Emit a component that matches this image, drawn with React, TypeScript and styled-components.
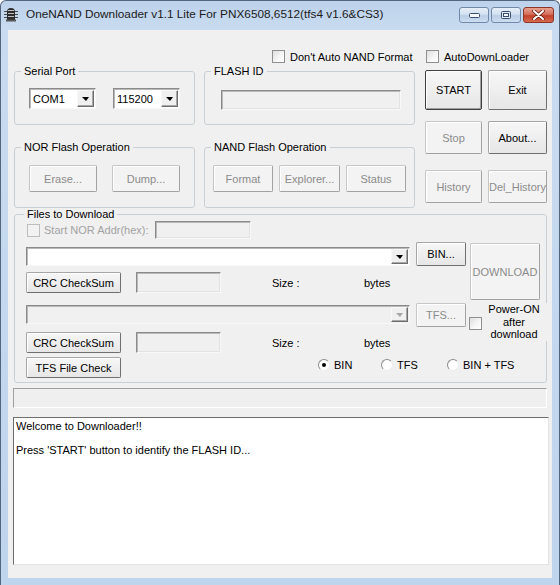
import React from 'react';
import styled, { createGlobalStyle } from 'styled-components';

const GlobalStyle = createGlobalStyle`
  html, body {
    margin: 0;
    padding: 0;
    background: #ffffff;
  }
  body {
    font-family: "Liberation Sans", Arial, sans-serif;
    font-size: 11px;
    color: #000;
  }
  * {
    box-sizing: border-box;
  }
`;

const Window = styled.div`
  width: 560px;
  height: 585px;
  display: flex;
  flex-direction: column;
  border: 1px solid #54667d;
  border-bottom: none;
  border-radius: 6px 6px 0 0;
  background: linear-gradient(#bdd2eb, #c8dbf0 28px, #bfd4ed);
  padding: 0 7px 7px;
  overflow: hidden;
`;

const TitleBar = styled.div`
  height: 29px;
  flex: none;
  display: flex;
  align-items: flex-start;
  margin: 0 -7px;
  padding: 0 5px 0 3px;
`;

const AppIcon = styled.svg`
  flex: none;
  margin-top: 6px;
`;

const Title = styled.div`
  flex: 1;
  margin: 6px 0 0 8px;
  font-size: 11.8px;
  line-height: 15px;
  color: #1b1b1b;
  white-space: nowrap;
  overflow: hidden;
`;

const CaptionGroup = styled.div`
  display: flex;
  gap: 2px;
  margin-top: 6px;
`;

const Caption = styled.div<{ $close?: boolean }>`
  width: ${(p) => (p.$close ? 31 : 30)}px;
  height: 16px;
  display: grid;
  place-items: center;
  border: 1px solid ${(p) => (p.$close ? '#8c3526' : '#7089a8')};
  border-radius: 3px;
  background: ${(p) =>
    p.$close
      ? 'linear-gradient(#e8a08f, #d46f5c 45%, #c2412a 55%, #d66b4f)'
      : 'linear-gradient(#e7eff8, #d2e0f0 45%, #b9cde5 55%, #cddef1)'};
`;

const Client = styled.div`
  flex: 1;
  display: flex;
  flex-direction: column;
  background: #f0f0f0;
  padding: 19px 5px 0 6px;
`;

const Top = styled.div`
  display: grid;
  grid-template-columns: 401px 122px;
  column-gap: 10px;
`;

const Column = styled.div`
  display: flex;
  flex-direction: column;
`;

const CheckRow = styled.div<{ $indent?: number }>`
  height: 15px;
  display: flex;
  align-items: center;
  gap: 5px;
  padding-left: ${(p) => p.$indent ?? 0}px;
  white-space: nowrap;
`;

const Box = styled.span<{ $disabled?: boolean }>`
  width: 13px;
  height: 13px;
  flex: none;
  border: 1px solid ${(p) => (p.$disabled ? '#bdbdbd' : '#8e8f8f')};
  background: ${(p) =>
    p.$disabled ? '#f2f2f2' : 'linear-gradient(135deg, #dedede, #f7f7f7 60%, #ffffff)'};
`;

const Muted = styled.span`
  color: #a2a2a2;
`;

const GroupRow = styled.div<{ $mt?: number }>`
  display: flex;
  gap: 9px;
  margin-top: ${(p) => p.$mt ?? 0}px;
`;

const Group = styled.fieldset<{ $w: number; $h: number; $mt?: number }>`
  width: ${(p) => p.$w}px;
  height: ${(p) => p.$h}px;
  min-width: 0;
  margin: ${(p) => p.$mt ?? 0}px 0 0 0;
  padding: 0;
  border: 1px solid #c9d0d5;
  border-radius: 3px;
`;

const Legend = styled.legend<{ $indent?: number }>`
  margin-left: ${(p) => p.$indent ?? 6}px;
  padding: 0 3px;
  font-size: 11px;
  line-height: 14px;
`;

const GroupBody = styled.div<{ $pt: number; $pl: number; $gap?: number }>`
  display: flex;
  align-items: flex-start;
  gap: ${(p) => p.$gap ?? 0}px;
  padding: ${(p) => p.$pt}px 0 0 ${(p) => p.$pl}px;
`;

const Button = styled.button<{ $w: number; $h: number; $default?: boolean; $mt?: number }>`
  width: ${(p) => p.$w}px;
  height: ${(p) => p.$h}px;
  flex: none;
  margin: ${(p) => p.$mt ?? 0}px 0 0 0;
  padding: 0;
  font: inherit;
  color: #000;
  white-space: nowrap;
  border: 1px solid;
  border-color: ${(p) =>
    p.$default ? '#3f3f3f' : '#a6a6a6 #6f6f6f #6f6f6f #a6a6a6'};
  border-radius: 2px;
  background: linear-gradient(#f7f7f7, #e6e6e6);
  box-shadow: ${(p) =>
    p.$default ? 'inset 1px 1px 0 #ffffff, inset -1px -1px 0 #a0a0a0' : 'inset 1px 1px 0 #ffffff'};

  &:disabled {
    color: #8b8b8b;
    border-color: #c6c6c6 #a2a2a2 #a2a2a2 #c6c6c6;
    background: #f3f3f3;
  }
`;

const ButtonRow = styled.div<{ $mt: number }>`
  display: flex;
  gap: 6px;
  margin-top: ${(p) => p.$mt}px;
`;

const Edit = styled.div<{ $w: number; $h: number; $white?: boolean; $mt?: number }>`
  width: ${(p) => p.$w}px;
  height: ${(p) => p.$h}px;
  flex: none;
  margin-top: ${(p) => p.$mt ?? 0}px;
  background: ${(p) => (p.$white ? '#ffffff' : '#f0f0f0')};
  border: 1px solid;
  border-color: #8a8a8a #f8f8f8 #f8f8f8 #8a8a8a;
  box-shadow: inset 1px 1px 0 #b9b9b9, inset -1px -1px 0 #e2e2e2;
`;

const Combo = styled.div<{ $w: number; $h: number; $disabled?: boolean; $mt?: number }>`
  width: ${(p) => p.$w}px;
  height: ${(p) => p.$h}px;
  flex: none;
  display: flex;
  align-items: stretch;
  margin-top: ${(p) => p.$mt ?? 0}px;
  padding: 1px;
  background: ${(p) => (p.$disabled ? '#f0f0f0' : '#ffffff')};
  border: 1px solid;
  border-color: #8a8a8a #f8f8f8 #f8f8f8 #8a8a8a;
  box-shadow: inset 1px 1px 0 #b9b9b9;
`;

const ComboValue = styled.span`
  flex: 1;
  display: flex;
  align-items: center;
  padding-left: 2px;
`;

const DropButton = styled.span`
  width: 17px;
  flex: none;
  display: grid;
  place-items: center;
  background: #f0f0f0;
  border: 1px solid;
  border-color: #f8f8f8 #6e6e6e #6e6e6e #f8f8f8;
  box-shadow: inset -1px -1px 0 #a8a8a8;
`;

const Arrow = styled.span<{ $disabled?: boolean }>`
  width: 0;
  height: 0;
  border-left: 4px solid transparent;
  border-right: 3px solid transparent;
  border-top: 4px solid ${(p) => (p.$disabled ? '#a6a6a6' : '#000')};
`;

const FilesBody = styled.div`
  display: flex;
  flex-direction: column;
  padding-left: 11px;
`;

const Line = styled.div<{ $mt?: number; $h?: number; $center?: boolean }>`
  display: flex;
  align-items: ${(p) => (p.$center ? 'center' : 'flex-start')};
  margin-top: ${(p) => p.$mt ?? 0}px;
  ${(p) => (p.$h ? `height: ${p.$h}px;` : '')}
`;

const Label = styled.span<{ $w?: number; $ml?: number }>`
  ${(p) => (p.$w ? `width: ${p.$w}px;` : '')}
  margin-left: ${(p) => p.$ml ?? 0}px;
  flex: none;
  white-space: nowrap;
`;

const Block = styled.div<{ $mt: number }>`
  display: flex;
  align-items: flex-start;
  margin-top: ${(p) => p.$mt}px;
`;

const BlockLeft = styled.div`
  width: 440px;
  flex: none;
  display: flex;
  flex-direction: column;
`;

const PowerBox = styled.div`
  display: flex;
  align-items: flex-start;
  margin-left: 3px;
`;

const PowerCheck = styled(Box)`
  margin-top: 14px;
`;

const PowerLabel = styled.div`
  width: 66px;
  margin-left: 1px;
  padding-right: 4px;
  text-align: center;
  line-height: 12.5px;
  background: #f0f0f0;
`;

const Radios = styled.div`
  display: flex;
  margin: 1px 0 0 197px;
`;

const RadioItem = styled.label<{ $w?: number }>`
  ${(p) => (p.$w ? `width: ${p.$w}px;` : '')}
  display: flex;
  align-items: center;
  gap: 4px;
  height: 13px;
  white-space: nowrap;
`;

const RadioDot = styled.span<{ $on?: boolean }>`
  width: 12px;
  height: 12px;
  flex: none;
  display: grid;
  place-items: center;
  border-radius: 50%;
  border: 1px solid;
  border-color: #8c8c8c #ececec #ececec #8c8c8c;
  background: #ffffff;

  &::after {
    content: '';
    width: 4px;
    height: 4px;
    border-radius: 50%;
    background: ${(p) => (p.$on ? '#000' : 'transparent')};
  }
`;

const Progress = styled.div`
  width: 534px;
  height: 20px;
  margin: 5px 0 0 -1px;
  border: 1px solid;
  border-color: #a0a0a0 #ffffff #ffffff #a0a0a0;
  background: #efefef;
`;

const Log = styled.div`
  width: 536px;
  height: 148px;
  margin: 9px 0 0 -1px;
  padding: 2px 2px;
  background: #ffffff;
  border: 1px solid;
  border-color: #6f6f6f #e3e3e3 #e3e3e3 #6f6f6f;
  line-height: 12px;
`;

const LogLine = styled.div<{ $mt?: number }>`
  margin-top: ${(p) => p.$mt ?? 0}px;
  white-space: nowrap;
`;

const ChipIcon = () => (
  <AppIcon width="14" height="15" viewBox="0 0 14 15">
    <g stroke="#4a4a4a" strokeWidth="1">
      <line x1="0" y1="4.5" x2="14" y2="4.5" />
      <line x1="0" y1="7.5" x2="14" y2="7.5" />
      <line x1="0" y1="10.5" x2="14" y2="10.5" />
    </g>
    <path d="M3 13 V5 Q3 1 7 1 Q11 1 11 5 V13 Z" fill="#2c2c2c" />
    <g stroke="#bdbdbd" strokeWidth="1">
      <line x1="4" y1="3.5" x2="10" y2="3.5" />
      <line x1="4" y1="6.5" x2="10" y2="6.5" />
      <line x1="4" y1="9.5" x2="10" y2="9.5" />
    </g>
    <rect x="2" y="12.5" width="10" height="2" fill="#555" />
  </AppIcon>
);

const Checkbox = ({ label, disabled }: { label: string; disabled?: boolean }) => (
  <>
    <Box $disabled={disabled} />
    {disabled ? <Muted>{label}</Muted> : <span>{label}</span>}
  </>
);

const ComboBox = ({
  w,
  h,
  value,
  disabled,
  mt,
}: {
  w: number;
  h: number;
  value?: string;
  disabled?: boolean;
  mt?: number;
}) => (
  <Combo $w={w} $h={h} $disabled={disabled} $mt={mt}>
    <ComboValue>{value}</ComboValue>
    <DropButton>
      <Arrow $disabled={disabled} />
    </DropButton>
  </Combo>
);

const FileRow = () => (
  <>
    <Button $w={95} $h={21}>
      CRC CheckSum
    </Button>
    <Label $ml={15} />
    <Edit $w={85} $h={21} />
    <Label $w={92} $ml={51}>
      Size :
    </Label>
    <Label>bytes</Label>
  </>
);

export default function App() {
  return (
    <>
      <GlobalStyle />
      <Window>
        <TitleBar>
          <ChipIcon />
          <Title>OneNAND Downloader v1.1 Lite For PNX6508,6512(tfs4 v1.6&amp;CS3)</Title>
          <CaptionGroup>
            <Caption>
              <svg width="11" height="5" viewBox="0 0 11 5">
                <rect x="0.5" y="0.5" width="10" height="4" rx="1" fill="#f4f8fc" stroke="#3a4f6c" />
              </svg>
            </Caption>
            <Caption>
              <svg width="10" height="8" viewBox="0 0 10 8">
                <rect x="0.5" y="0.5" width="9" height="7" rx="1" fill="#dfe8f3" stroke="#3a4f6c" />
                <rect x="2.5" y="2.5" width="5" height="3" fill="#f7fafd" stroke="#3a4f6c" />
              </svg>
            </Caption>
            <Caption $close>
              <svg width="13" height="10" viewBox="0 0 13 10">
                <path
                  d="M2 1 L11 9 M11 1 L2 9"
                  stroke="#6a1f14"
                  strokeWidth="3.6"
                  strokeLinecap="round"
                />
                <path d="M2 1 L11 9 M11 1 L2 9" stroke="#ffffff" strokeWidth="2" strokeLinecap="round" />
              </svg>
            </Caption>
          </CaptionGroup>
        </TitleBar>

        <Client>
          <Top>
            <Column>
              <CheckRow $indent={258}>
                <Checkbox label="Don't Auto NAND Format" />
              </CheckRow>
              <GroupRow>
                <Group $w={181} $h={61}>
                  <Legend>Serial Port</Legend>
                  <GroupBody $pt={10} $pl={14} $gap={17}>
                    <ComboBox w={67} h={21} value="COM1" />
                    <ComboBox w={67} h={21} value="115200" />
                  </GroupBody>
                </Group>
                <Group $w={211} $h={61}>
                  <Legend>FLASH ID</Legend>
                  <GroupBody $pt={12} $pl={16}>
                    <Edit $w={180} $h={20} />
                  </GroupBody>
                </Group>
              </GroupRow>
              <GroupRow $mt={15}>
                <Group $w={181} $h={68}>
                  <Legend>NOR Flash Operation</Legend>
                  <GroupBody $pt={11} $pl={14} $gap={15}>
                    <Button $w={68} $h={27} disabled>
                      Erase...
                    </Button>
                    <Button $w={68} $h={27} disabled>
                      Dump...
                    </Button>
                  </GroupBody>
                </Group>
                <Group $w={211} $h={68}>
                  <Legend>NAND Flash Operation</Legend>
                  <GroupBody $pt={11} $pl={8} $gap={6}>
                    <Button $w={60} $h={27} disabled>
                      Format
                    </Button>
                    <Button $w={61} $h={27} disabled>
                      Explorer...
                    </Button>
                    <Button $w={60} $h={27} disabled>
                      Status
                    </Button>
                  </GroupBody>
                </Group>
              </GroupRow>
            </Column>

            <Column>
              <CheckRow $indent={1}>
                <Checkbox label="AutoDownLoader" />
              </CheckRow>
              <ButtonRow $mt={6}>
                <Button $w={57} $h={40} $default>
                  START
                </Button>
                <Button $w={59} $h={40}>
                  Exit
                </Button>
              </ButtonRow>
              <ButtonRow $mt={11}>
                <Button $w={57} $h={33} disabled>
                  Stop
                </Button>
                <Button $w={59} $h={33}>
                  About...
                </Button>
              </ButtonRow>
              <ButtonRow $mt={16}>
                <Button $w={57} $h={33} disabled>
                  History
                </Button>
                <Button $w={59} $h={33} disabled>
                  Del_History
                </Button>
              </ButtonRow>
            </Column>
          </Top>

          <Group $w={533} $h={176} $mt={-1}>
            <Legend $indent={9}>Files to Download</Legend>
            <FilesBody>
              <Line $h={18} $center>
                <Label $ml={1} />
                <Box $disabled />
                <Label $w={111} $ml={4}>
                  <Muted>Start NOR Addr(hex):</Muted>
                </Label>
                <Edit $w={96} $h={18} />
              </Line>

              <Block $mt={3}>
                <BlockLeft>
                  <Line>
                    <ComboBox w={384} h={19} mt={5} />
                    <Label $ml={6} />
                    <Button $w={50} $h={24}>
                      BIN...
                    </Button>
                  </Line>
                  <Line $mt={6} $center>
                    <FileRow />
                  </Line>
                </BlockLeft>
                <Label $ml={4} />
                <Button $w={70} $h={57} $mt={1} disabled>
                  DOWNLOAD
                </Button>
              </Block>

              <Block $mt={3}>
                <BlockLeft>
                  <Line>
                    <ComboBox w={384} h={19} mt={2} disabled />
                    <Label $ml={6} />
                    <Button $w={50} $h={24} disabled>
                      TFS...
                    </Button>
                  </Line>
                  <Line $mt={5} $center>
                    <FileRow />
                  </Line>
                </BlockLeft>
                <PowerBox>
                  <PowerCheck />
                  <PowerLabel>
                    Power-ON
                    <br />
                    after
                    <br />
                    download
                  </PowerLabel>
                </PowerBox>
              </Block>

              <Line $mt={4}>
                <Button $w={95} $h={21}>
                  TFS File Check
                </Button>
                <Radios>
                  <RadioItem $w={63}>
                    <RadioDot $on />
                    BIN
                  </RadioItem>
                  <RadioItem $w={66}>
                    <RadioDot />
                    TFS
                  </RadioItem>
                  <RadioItem>
                    <RadioDot />
                    BIN + TFS
                  </RadioItem>
                </Radios>
              </Line>
            </FilesBody>
          </Group>

          <Progress />

          <Log>
            <LogLine>Welcome to Downloader!!</LogLine>
            <LogLine $mt={12}>Press 'START' button to identify the FLASH ID...</LogLine>
          </Log>
        </Client>
      </Window>
    </>
  );
}
